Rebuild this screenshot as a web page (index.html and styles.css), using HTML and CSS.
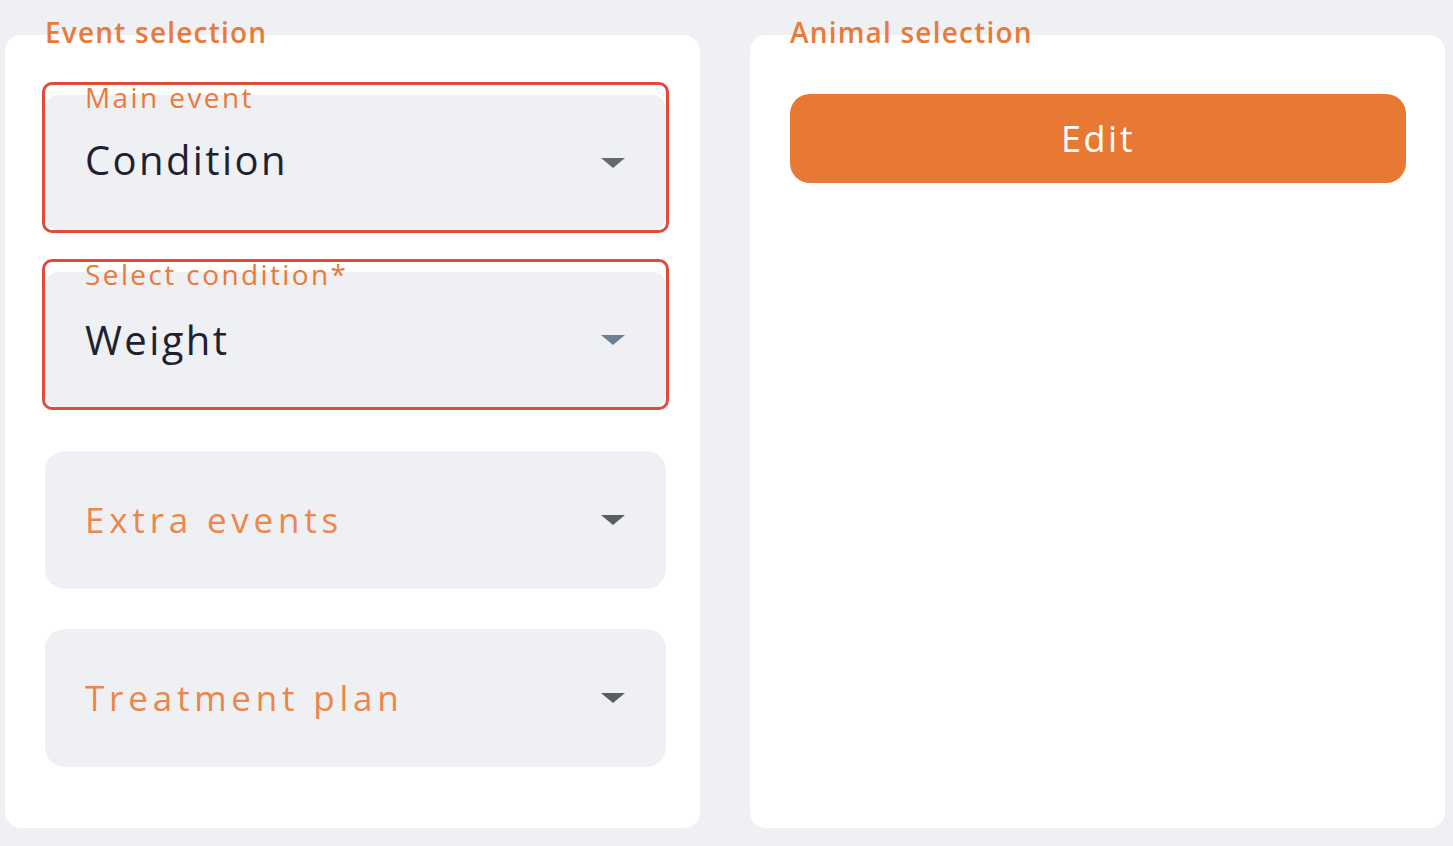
FILE: index.html
```html
<!DOCTYPE html>
<html lang="en">
<head>
<meta charset="utf-8">
<title>Event</title>
<link rel="stylesheet" href="styles.css">
</head>
<body>
<main class="page">
  <section class="panel">
    <h2 class="panel-title">Event selection</h2>
    <div class="card card-left">
      <div class="field field-outlined field-first">
        <span class="field-label">Main event</span>
        <div class="field-box">
          <span class="field-value">Condition</span>
          <span class="caret caret-gray"></span>
        </div>
      </div>
      <div class="field field-outlined field-second">
        <span class="field-label">Select condition*</span>
        <div class="field-box">
          <span class="field-value field-value-low">Weight</span>
          <span class="caret caret-slate"></span>
        </div>
      </div>
      <div class="field-box field-plain field-third">
        <span class="field-placeholder">Extra events</span>
        <span class="caret caret-dark"></span>
      </div>
      <div class="field-box field-plain field-fourth">
        <span class="field-placeholder">Treatment plan</span>
        <span class="caret caret-dark"></span>
      </div>
    </div>
  </section>
  <section class="panel">
    <h2 class="panel-title">Animal selection</h2>
    <div class="card card-right">
      <button class="edit-btn" type="button">Edit</button>
    </div>
  </section>
</main>
</body>
</html>
```
FILE: styles.css
```css
* { box-sizing: border-box; }
html, body { margin: 0; padding: 0; }
body {
  background: #eff0f4;
  font-family: "Open Sans", "Liberation Sans", sans-serif;
  width: 1453px;
  height: 846px;
  overflow: hidden;
}
.page {
  display: grid;
  grid-template-columns: 695px 695px;
  column-gap: 50px;
  padding: 0 8px 18px 5px;
  height: 846px;
}
.panel {
  display: flex;
  flex-direction: column;
  padding-top: 17px;
}
.panel-title {
  position: relative;
  z-index: 1;
  margin: 0 0 -12px 40px;
  height: 30px;
  line-height: 30px;
  font-size: 28px;
  font-weight: 600;
  letter-spacing: 1.2px;
  color: #ea7a38;
}
.card {
  flex: 1;
  background: #fff;
  border-radius: 16px;
}
.card-left {
  display: flex;
  flex-direction: column;
  padding: 47px 34px 0 40px;
}
.card-right {
  padding: 59px 39px 0 40px;
}
.field { position: relative; }
.field-outlined {
  margin: 0 -3px;
  border: 3px solid #e04b3a;
  border-radius: 10px;
  padding-top: 10px;
}
.field-second { margin-top: 26px; }
.field-label {
  position: absolute;
  top: -3px;
  left: 40px;
  z-index: 1;
  font-size: 28px;
  line-height: 30px;
  font-weight: 500;
  letter-spacing: 2.4px;
  color: #ea7a38;
}
.field-box {
  display: flex;
  align-items: center;
  justify-content: space-between;
  height: 135px;
  padding: 0 41px 0 40px;
  background: #eff0f4;
  border-radius: 14px;
}
.field-plain {
  height: 138px;
  border-radius: 20px;
}
.field-third { margin-top: 41px; }
.field-fourth { margin-top: 40px; }
.field-value {
  font-size: 40px;
  line-height: 48px;
  color: #1e2230;
  letter-spacing: 2.4px;
  margin-bottom: 6px;
}
.field-value-low { margin-bottom: 0; }
.field-placeholder {
  font-size: 35px;
  line-height: 44px;
  color: #ec864a;
  letter-spacing: 4.8px;
}
.caret {
  width: 0;
  height: 0;
  border-left: 12.5px solid transparent;
  border-right: 12.5px solid transparent;
  border-top: 10px solid #666;
}
.caret-gray { border-top-color: #666a70; }
.caret-slate { border-top-color: #6d7f94; }
.caret-dark { border-top-color: #5a5d63; }
.edit-btn {
  display: block;
  width: 616px;
  height: 89px;
  border: 0;
  border-radius: 20px;
  background: #e87935;
  color: #fff;
  font-family: "Open Sans", "Liberation Sans", sans-serif;
  font-size: 36px;
  letter-spacing: 2.5px;
  cursor: pointer;
}
```
